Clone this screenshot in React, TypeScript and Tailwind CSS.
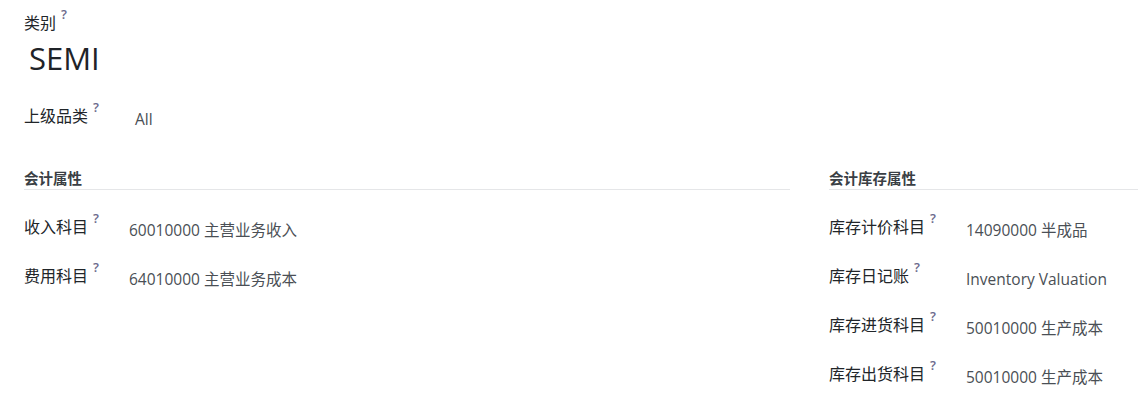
import React from "react";

const font = { fontFamily: '"Open Sans", "Noto Sans CJK SC", sans-serif' };

function Help() {
  return (
    <span className="ml-[5px] inline-block align-top text-[13px] leading-[13px] font-semibold text-[#6b6a8c] relative -top-[4px]">
      ?
    </span>
  );
}

function Row({ label, value, labelW }: { label: string; value: string; labelW: string }) {
  return (
    <div className="flex items-start h-[49px]">
      <div className={`${labelW} shrink-0 text-[16px] text-[#212529] leading-[22px]`}>
        {label}
        <Help />
      </div>
      <div className="text-[15.5px] text-[#4a4f55] leading-[22px] pt-[3px]">{value}</div>
    </div>
  );
}

export default function App() {
  return (
    <div className="w-[1138px] h-[417px] bg-white pl-6 pt-[12px] overflow-hidden" style={font}>
      <div className="text-[16px] text-[#212529] leading-[22px]">
        类别
        <Help />
      </div>
      <div className="text-[31px] text-[#1f2328] leading-[40px] pl-[5px] mt-[4px]">SEMI</div>
      <div className="flex items-start mt-[27px]">
        <div className="w-[111px] shrink-0 text-[16px] text-[#212529] leading-[22px]">
          上级品类
          <Help />
        </div>
        <div className="text-[15.5px] text-[#4a4f55] leading-[22px] pt-[3px]">All</div>
      </div>

      <div className="flex mt-[39px]">
        <div className="w-[766px]">
          <div className="text-[14.5px] font-bold text-[#3a3f45] leading-[20px] border-b border-[#e5e6e8]">会计属性</div>
          <div className="pt-[26px]">
            <Row label="收入科目" value="60010000 主营业务收入" labelW="w-[105px]" />
            <Row label="费用科目" value="64010000 主营业务成本" labelW="w-[105px]" />
          </div>
        </div>
        <div className="ml-[39px] flex-1">
          <div className="text-[14.5px] font-bold text-[#3a3f45] leading-[20px] border-b border-[#e5e6e8]">会计库存属性</div>
          <div className="pt-[26px]">
            <Row label="库存计价科目" value="14090000 半成品" labelW="w-[137px]" />
            <Row label="库存日记账" value="Inventory Valuation" labelW="w-[137px]" />
            <Row label="库存进货科目" value="50010000 生产成本" labelW="w-[137px]" />
            <Row label="库存出货科目" value="50010000 生产成本" labelW="w-[137px]" />
          </div>
        </div>
      </div>
    </div>
  );
}
